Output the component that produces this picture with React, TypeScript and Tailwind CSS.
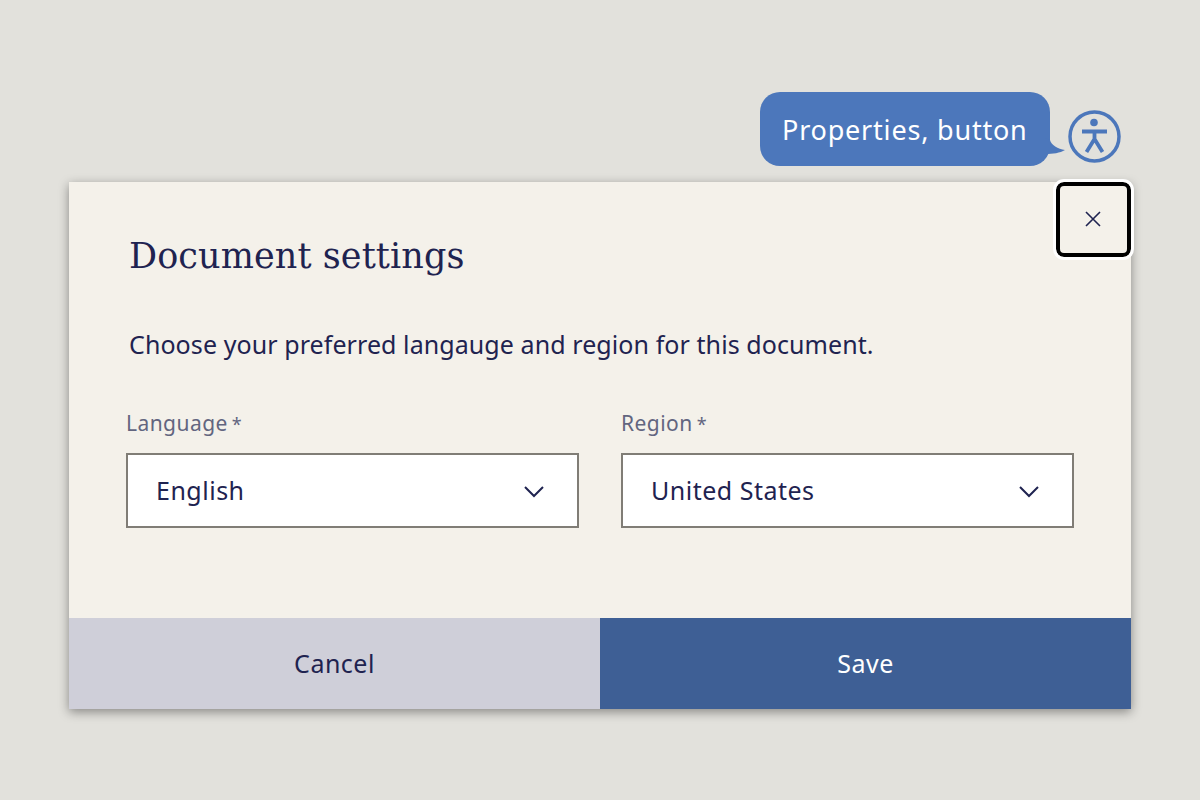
import React from "react";

const SelectField = ({ label, value }: { label: string; value: string }) => {
  return (
    <div className="w-[453px]">
      <div className="mt-[-1px] h-[25px] text-[21px] leading-[24px] tracking-[0.45px] text-[#62657f]">
        {label}
        <span className="ml-[4px] text-[18px]">*</span>
      </div>
      <div className="mt-[17px] flex h-[75px] items-center justify-between border-2 border-[#807d76] bg-white pl-[28px] pr-[32px] text-[25px] tracking-[0.5px] text-[#1f2350]">
        <span>{value}</span>
        <svg width="22" height="14" viewBox="0 0 22 14" fill="none">
          <path d="M2 3l9 9 9-9" stroke="#1f2350" strokeWidth="2" />
        </svg>
      </div>
    </div>
  );
};

const App = () => {
  return (
    <div
      className="h-[800px] w-[1200px] overflow-hidden bg-[#e2e1dc] px-[69px] pt-[92px]"
      style={{ fontFamily: '"Noto Sans", sans-serif' }}
    >
      <div className="flex h-[74px] justify-end pr-[10px]">
        <div className="relative flex h-[74px] w-[290px] items-center rounded-[20px] bg-[#4c77bb] pl-[22px] text-[27px] tracking-[0.8px] text-white">
          <span className="mt-[2px]">Properties, button</span>
          <svg
            className="absolute left-[285px] top-[46px]"
            width="20"
            height="20"
            viewBox="0 0 20 20"
          >
            <path d="M0 0l5 2c1 5 8 9 15 10-5 3-12 4-20 4z" fill="#4c77bb" />
          </svg>
        </div>
        <svg className="ml-[17px] mt-[17px]" width="54" height="54" viewBox="0 0 54 54" fill="none">
          <circle cx="27.5" cy="27.5" r="24.5" stroke="#4c77bb" strokeWidth="3.5" />
          <circle cx="27" cy="13.5" r="3.8" fill="#4c77bb" />
          <path
            d="M15 22.5h25M27.5 22.5v9M27.5 30l-8 13M27.5 30l8 13"
            stroke="#4c77bb"
            strokeWidth="3.8"
          />
        </svg>
      </div>

      <div className="relative mt-[16px] flex h-[527px] flex-col bg-[#f4f1ea] shadow-[0_3px_10px_rgba(0,0,0,0.4)]">
        <div className="flex-1 pt-[51px]">
          <h1
            className="pl-[60px] text-[35px] leading-[46px] tracking-[0.1px] text-[#1f2350]"
            style={{ fontFamily: '"DejaVu Serif", serif' }}
          >
            Document settings
          </h1>
          <p className="mt-[49px] pl-[60px] text-[25px] leading-[32px] tracking-[0.08px] text-[#1f2350]">
            Choose your preferred langauge and region for this document.
          </p>
          <div className="mt-[52px] flex gap-[42px] pl-[57px]">
            <SelectField label="Language" value="English" />
            <SelectField label="Region" value="United States" />
          </div>
        </div>

        <div className="flex h-[91px] text-[25px] tracking-[0.5px]">
          <div className="flex w-[531px] items-center justify-center bg-[#cfcfd9] text-[#1f2350]">
            Cancel
          </div>
          <div className="flex flex-1 items-center justify-center bg-[#3e5f95] text-white">
            Save
          </div>
        </div>

        <div className="absolute right-0 top-0 flex h-[75px] w-[75px] items-center justify-center rounded-[8px] border-[4px] border-black bg-[#f4f1ea] pb-[2px] pr-[2px] outline-[3px] outline-white">
          <svg width="18" height="18" viewBox="0 0 18 18" fill="none">
            <path d="M2 2l14 14M16 2L2 16" stroke="#1f2350" strokeWidth="1.6" />
          </svg>
        </div>
      </div>
    </div>
  );
};

export default App;
